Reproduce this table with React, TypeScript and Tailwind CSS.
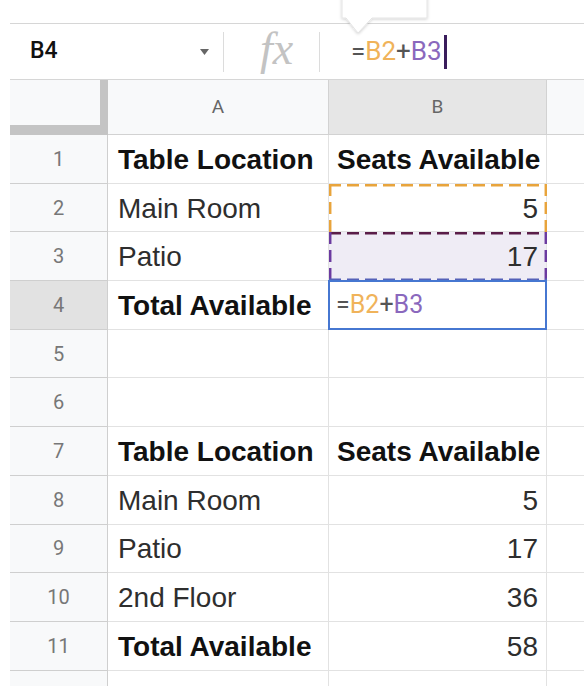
import React from "react";

type Row = {
  n: number;
  a?: string;
  b?: string;
  boldA?: boolean;
  boldB?: boolean;
};

const rows: Row[] = [
  { n: 1, a: "Table Location", b: "Seats Available", boldA: true, boldB: true },
  { n: 2, a: "Main Room", b: "5" },
  { n: 3, a: "Patio", b: "17" },
  { n: 4, a: "Total Available", boldA: true },
  { n: 5 },
  { n: 6 },
  { n: 7, a: "Table Location", b: "Seats Available", boldA: true, boldB: true },
  { n: 8, a: "Main Room", b: "5" },
  { n: 9, a: "Patio", b: "17" },
  { n: 10, a: "2nd Floor", b: "36" },
  { n: 11, a: "Total Available", b: "58", boldA: true },
  { n: 12 },
];

function Formula({ size }: { size: string }) {
  return (
    <span className={`font-['Roboto',sans-serif] font-normal ${size}`}>
      <span className="text-[#555]">=</span>
      <span className="text-[#f0b35a]">B2</span>
      <span className="text-[#555]">+</span>
      <span className="text-[#8a68bd]">B3</span>
    </span>
  );
}

// dashed range outline drawn over a B cell
function Marching({ top, sides, bottom }: { top: string; sides: string; bottom?: string }) {
  const dash = "12 6";
  return (
    <svg className="absolute left-0 top-0 w-[218px] h-[49px] pointer-events-none" viewBox="0 0 218 49">
      <line x1="0" y1="1.2" x2="218" y2="1.2" stroke={top} strokeWidth="2.5" strokeDasharray={dash} />
      <line x1="1.2" y1="0" x2="1.2" y2="49" stroke={sides} strokeWidth="2.5" strokeDasharray={dash} />
      <line x1="216.8" y1="0" x2="216.8" y2="49" stroke={sides} strokeWidth="2.5" strokeDasharray={dash} />
      {bottom && (
        <line x1="0" y1="47.8" x2="218" y2="47.8" stroke={bottom} strokeWidth="2.5" strokeDasharray={dash} />
      )}
    </svg>
  );
}

export default function App() {
  return (
    <div className="relative w-[584px] h-[686px] overflow-hidden bg-white font-['Liberation_Sans',Arial,sans-serif] text-[#222]">

      {/* tooltip callout */}
      <svg className="absolute left-0 top-0 w-[584px] h-[40px] z-10" viewBox="0 0 584 40">
        <defs>
          <filter id="sh" x="-20%" y="-50%" width="140%" height="200%">
            <feDropShadow dx="0" dy="1" stdDeviation="1.5" floodColor="#000" floodOpacity="0.18" />
          </filter>
        </defs>
        <path
          d="M342 -4 L427 -4 L427 18 L372 18 L358 33 L346 18 L342 18 Z"
          fill="#fff"
          stroke="#e4e4e4"
          strokeWidth="1"
          filter="url(#sh)"
        />
      </svg>

      {/* top strip */}
      <div className="h-[23px]" />

      {/* formula bar */}
      <div className="ml-[10px] h-[57px] border-t border-b border-[#d6d6d6] flex items-center">
        <div className="w-[213px] h-full flex items-center justify-between pl-[20px] pr-[14px]">
          <span className="text-[23px] text-[#111] font-medium font-['Roboto',sans-serif]">B4</span>
          <svg width="9" height="6" viewBox="0 0 9 6">
            <path d="M0 0 L9 0 L4.5 6 Z" fill="#666" />
          </svg>
        </div>
        <div className="w-px h-[40px] bg-[#dcdcdc]" />
        <div className="w-[95px] flex justify-center pl-[10px]">
          <span className="font-['Liberation_Serif',serif] italic text-[46px] leading-none text-[#c3c3c3] -mt-[6px]">
            fx
          </span>
        </div>
        <div className="w-px h-[40px] bg-[#dcdcdc]" />
        <div className="pl-[31px] flex items-center">
          <Formula size="text-[26px]" />
          <span className="ml-[2px] w-[3px] h-[34px] bg-[#3a1d5c]" />
        </div>
      </div>

      {/* column headers */}
      <div className="ml-[10px] h-[55px] grid grid-cols-[98px_221px_218px_1fr]">
        <div className="bg-[#f8f9fa] border-r-[8px] border-b-[10px] border-[#c4c4c4]" />
        <div className="bg-[#f8f9fa] border-r border-b border-[#d2d2d2] flex items-center justify-center text-[19px] text-[#666] font-['Roboto',sans-serif]">
          A
        </div>
        <div className="bg-[#e6e6e6] border-r border-b border-[#d2d2d2] flex items-center justify-center text-[19px] text-[#666] font-['Roboto',sans-serif]">
          B
        </div>
        <div className="bg-[#f8f9fa] border-b border-[#d2d2d2]" />
      </div>

      {/* rows */}
      {rows.map((r) => (
        <div key={r.n} className="ml-[10px] h-[48.7px] grid grid-cols-[98px_221px_218px_1fr]">
          <div
            className={`border-r border-b border-[#cfcfcf] flex items-center justify-center text-[20px] text-[#777] font-['Roboto',sans-serif] ${
              r.n === 4 ? "bg-[#e2e2e2]" : "bg-[#f8f9fa]"
            }`}
          >
            {r.n}
          </div>
          <div
            className={`border-r border-b border-[#e2e2e2] flex items-center pl-[10px] pt-[2px] whitespace-nowrap text-[28px] ${
              r.boldA ? "font-bold text-[#111]" : "text-[#2e2e2e]"
            }`}
          >
            {r.a}
          </div>
          <div
            className={`relative border-r border-b border-[#e2e2e2] flex items-center pt-[2px] whitespace-nowrap text-[28px] ${
              r.boldB ? "font-bold text-[#111] pl-[8px]" : "text-[#2e2e2e] justify-end pr-[8px]"
            } ${r.n === 3 ? "bg-[#efecf5]" : ""}`}
          >
            {r.n === 4 ? (
              <div className="absolute -left-px -top-px w-[219px] h-[50px] border-2 border-[#4677d1] flex items-center pl-[6px]">
                <Formula size="text-[25px]" />
              </div>
            ) : (
              r.b
            )}
            {r.n === 2 && <Marching top="#e8a43c" sides="#e8a43c" />}
            {r.n === 3 && <Marching top="#5a1d48" sides="#6b3aa0" bottom="#5561b8" />}
          </div>
          <div className="border-b border-[#e2e2e2]" />
        </div>
      ))}
    </div>
  );
}
